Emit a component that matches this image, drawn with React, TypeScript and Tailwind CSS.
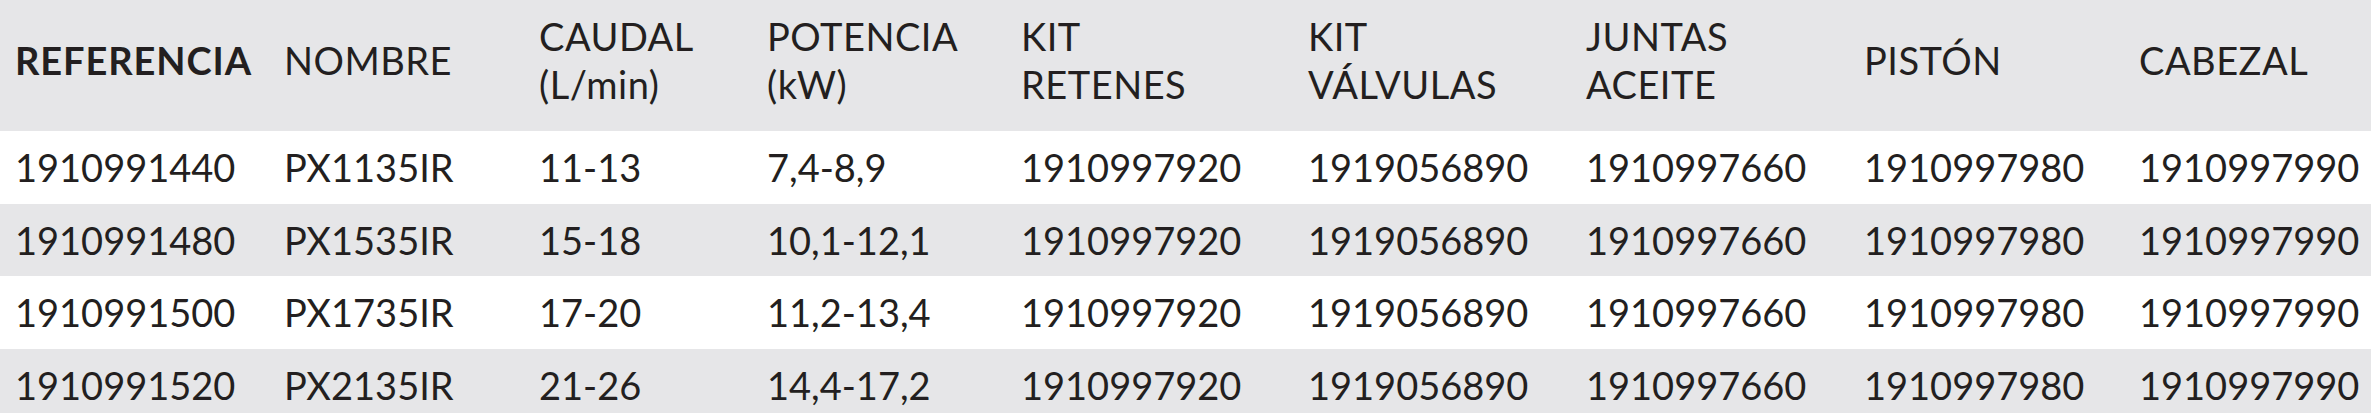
const headers: { label: string[]; bold?: boolean }[] = [
  { label: ["REFERENCIA"], bold: true },
  { label: ["NOMBRE"] },
  { label: ["CAUDAL", "(L/min)"] },
  { label: ["POTENCIA", "(kW)"] },
  { label: ["KIT", "RETENES"] },
  { label: ["KIT", "VÁLVULAS"] },
  { label: ["JUNTAS", "ACEITE"] },
  { label: ["PISTÓN"] },
  { label: ["CABEZAL"] },
];

const rows = [
  ["1910991440", "PX1135IR", "11-13", "7,4-8,9", "1910997920", "1919056890", "1910997660", "1910997980", "1910997990"],
  ["1910991480", "PX1535IR", "15-18", "10,1-12,1", "1910997920", "1919056890", "1910997660", "1910997980", "1910997990"],
  ["1910991500", "PX1735IR", "17-20", "11,2-13,4", "1910997920", "1919056890", "1910997660", "1910997980", "1910997990"],
  ["1910991520", "PX2135IR", "21-26", "14,4-17,2", "1910997920", "1919056890", "1910997660", "1910997980", "1910997990"],
];

const cols = "grid grid-cols-[269px_255px_228px_254px_287px_278px_278px_275px_1fr]";

export default function App() {
  return (
    <div
      className="w-[2371px] h-[413px] overflow-hidden bg-white text-[#231f20] text-[38px]"
      style={{ fontFamily: "Lato, 'Open Sans', sans-serif" }}
    >
      {/* Header */}
      <div className={`${cols} h-[131px] bg-[#e6e6e8]`}>
        {headers.map((h) => (
          <div
            key={h.label.join(" ")}
            className={`flex flex-col justify-center pl-[15px] pb-[12px] leading-[48px] whitespace-nowrap ${
              h.bold ? "font-bold tracking-[0.9px]" : "font-normal tracking-[0.5px]"
            }`}
          >
            {h.label.map((l) => (
              <span key={l}>{l}</span>
            ))}
          </div>
        ))}
      </div>

      {/* Rows */}
      {rows.map((r, i) => (
        <div
          key={r[0]}
          className={`${cols} h-[72.5px] ${i % 2 === 0 ? "bg-white" : "bg-[#e6e6e8]"}`}
        >
          {r.map((c, j) => (
            <div key={j} className="flex items-center pl-[15px] leading-none whitespace-nowrap">
              {c}
            </div>
          ))}
        </div>
      ))}
    </div>
  );
}
